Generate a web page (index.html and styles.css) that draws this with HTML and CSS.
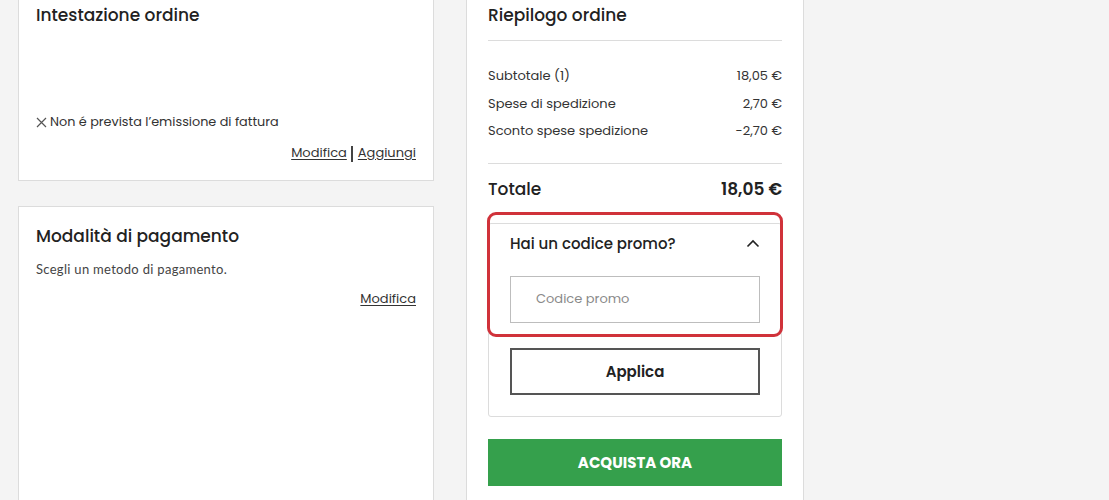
FILE: index.html
```html
<!DOCTYPE html>
<html lang="it">
<head>
<meta charset="utf-8">
<title>Checkout</title>
<link rel="stylesheet" href="styles.css">
</head>
<body>
<div class="page">
  <div class="left-col">
    <section class="card card-invoice">
      <h2 class="card-title">Intestazione ordine</h2>
      <p class="note"><svg class="x-icon" width="11" height="11" viewBox="0 0 11 11"><path d="M1 1L10 10M10 1L1 10" stroke="#555" stroke-width="1.2" fill="none"/></svg>Non é prevista l’emissione di fattura</p>
      <p class="links"><a href="#">Modifica</a><span class="sep"></span><a href="#">Aggiungi</a></p>
    </section>
    <section class="card card-payment">
      <h2 class="card-title">Modalità di pagamento</h2>
      <p class="hint">Scegli un metodo di pagamento.</p>
      <p class="links"><a href="#">Modifica</a></p>
    </section>
  </div>
  <aside class="summary">
    <h2 class="card-title summary-title">Riepilogo ordine</h2>
    <div class="divider"></div>
    <div class="rows">
      <div class="row"><span>Subtotale (1)</span><span>18,05 €</span></div>
      <div class="row"><span>Spese di spedizione</span><span>2,70 €</span></div>
      <div class="row"><span>Sconto spese spedizione</span><span>-2,70 €</span></div>
    </div>
    <div class="divider divider-total"></div>
    <div class="total"><span>Totale</span><span>18,05 €</span></div>
    <div class="promo">
      <div class="promo-head"><span>Hai un codice promo?</span><svg width="14" height="9" viewBox="0 0 14 9"><path d="M1.5 7.5L7 2L12.5 7.5" stroke="#222" stroke-width="1.6" fill="none"/></svg></div>
      <input class="promo-input" type="text" placeholder="Codice promo">
      <button class="btn-apply" type="button">Applica</button>
      <div class="highlight"></div>
    </div>
    <button class="btn-buy" type="button">ACQUISTA ORA</button>
  </aside>
</div>
</body>
</html>
```

FILE: styles.css
```css
* { box-sizing: border-box; }
html, body { margin: 0; padding: 0; }
body {
  background: #f4f4f4;
  font-family: "Poppins", "Inter", "Noto Sans", sans-serif;
  color: #222;
  height: 500px;
  overflow: hidden;
}
.page {
  display: flex;
  align-items: flex-start;
  gap: 32px;
  padding-left: 18px;
}
.left-col {
  width: 416px;
  display: flex;
  flex-direction: column;
  gap: 25px;
}
.card {
  background: #fff;
  border: 1px solid #dcdcdc;
  padding: 0 17px 17px;
}
.card-invoice { border-top: none; }
.card-payment { padding-top: 14px; min-height: 320px; }
.card-title {
  margin: 0;
  font-size: 17px;
  font-weight: 500;
  line-height: 30px;
  color: #222;
}
.note {
  margin: 82px 0 0;
  font-size: 12.8px;
  line-height: 20px;
  color: #333;
  display: flex;
  align-items: center;
  gap: 3px;
}
.x-icon { display: block; }
.links {
  margin: 11px 0 0;
  font-size: 13px;
  line-height: 20px;
  text-align: right;
  display: flex;
  justify-content: flex-end;
  align-items: center;
}
.links a { color: #333; text-decoration: underline; text-underline-offset: 2px; }
.sep { display: inline-block; width: 2px; height: 16px; background: #444; margin: 2px 5px 0 4px; }
.hint {
  margin: 9px 0 0;
  font-family: "Lato", "Noto Sans", sans-serif;
  font-size: 13px;
  letter-spacing: 0.3px;
  line-height: 18px;
  color: #444;
}
.card-payment .links { margin-top: 11px; }
.summary {
  width: 338px;
  min-height: 520px;
  background: #fff;
  border: 1px solid #dcdcdc;
  border-top: none;
  padding: 0 21px;
}
.summary-title { margin-bottom: 10px; }
.divider { height: 1px; background: #dcdcdc; }
.rows { padding-top: 21px; }
.row {
  display: flex;
  justify-content: space-between;
  font-size: 13px;
  line-height: 27.5px;
  color: #333;
}
.divider-total { margin-top: 18px; }
.total {
  display: flex;
  justify-content: space-between;
  margin-top: 10px;
  font-size: 17px;
  line-height: 30px;
  font-weight: 500;
}
.total span:last-child { font-weight: 600; }
.promo {
  position: relative;
  margin-top: 19px;
  border: 1px solid #dcdcdc;
  border-radius: 3px;
  padding: 0 21px 21px;
  display: flex;
  flex-direction: column;
}
.promo-head {
  display: flex;
  justify-content: space-between;
  align-items: center;
  height: 40px;
  margin-bottom: 12px;
  font-size: 15px;
  font-weight: 500;
  color: #222;
}
.promo-input {
  height: 47px;
  border: 1px solid #bdbdbd;
  padding: 0 25px;
  font-family: inherit;
  font-size: 13px;
  color: #222;
  background: #fff;
  outline: none;
}
.promo-input::placeholder { color: #8a8a8a; }
.btn-apply {
  margin-top: 25px;
  height: 47px;
  border: 2px solid #555;
  background: #fff;
  font-family: inherit;
  font-size: 15px;
  font-weight: 600;
  color: #222;
}
.highlight {
  position: absolute;
  left: -2px;
  right: -2px;
  top: -12px;
  height: 125px;
  border: 3px solid #d0323a;
  border-radius: 9px;
  pointer-events: none;
}
.btn-buy {
  display: block;
  width: 100%;
  margin-top: 22px;
  height: 47px;
  border: none;
  background: #35a04c;
  color: #fff;
  font-family: inherit;
  font-size: 15px;
  font-weight: 700;
}
```
